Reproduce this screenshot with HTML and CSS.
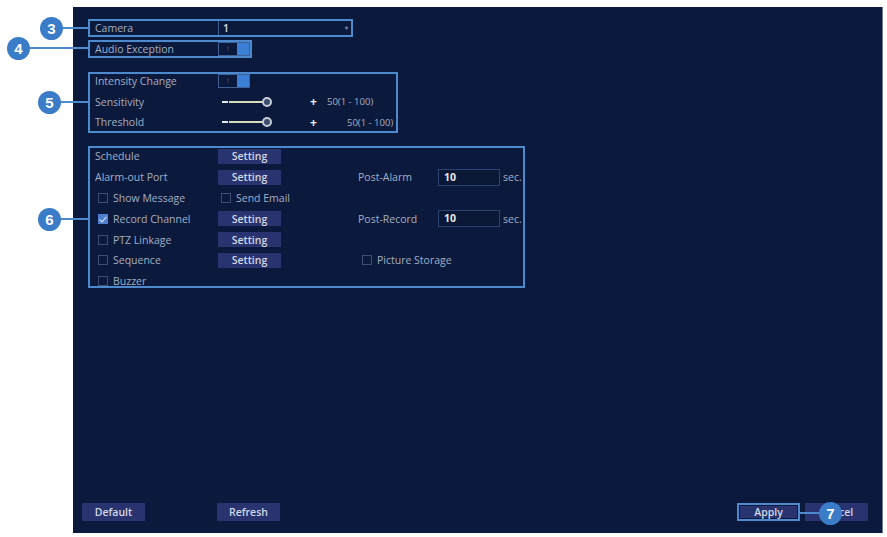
FILE: index.html
```html
<!DOCTYPE html>
<html lang="en">
<head>
    <meta charset="UTF-8">
    <title>Exception - Audio</title>
    <link rel="stylesheet" href="styles.css">
</head>
<body>
    <div id="stage">
        <div class="panel">
            <div class="box box-camera">
                <span class="label">Camera</span>
                <div class="select"><span>1</span><i class="caret">&#9662;</i></div>
            </div>
            <div class="box box-audio">
                <span class="label">Audio Exception</span>
                <span class="toggle"><b>1</b><i></i></span>
            </div>

            <div class="box box-level">
                <div class="rows">
                    <div class="row">
                        <span class="label">Intensity Change</span>
                        <span class="toggle"><b>1</b><i></i></span>
                    </div>
                    <div class="row">
                        <span class="label">Sensitivity</span>
                        <div class="slider">
                            <span class="minus"></span><span class="track"></span><span class="knob"></span>
                            <span class="plus">+</span><span class="range">50(1 - 100)</span>
                        </div>
                    </div>
                    <div class="row">
                        <span class="label">Threshold</span>
                        <div class="slider">
                            <span class="minus"></span><span class="track"></span><span class="knob"></span>
                            <span class="plus">+</span><span class="range far">50(1 - 100)</span>
                        </div>
                    </div>
                </div>
            </div>

            <div class="box box-link">
                <div class="grid">
                    <span class="label">Schedule</span>
                    <span class="btn small">Setting</span>
                    <span class="rest"></span>

                    <span class="label">Alarm-out Port</span>
                    <span class="btn small">Setting</span>
                    <span class="label plain">Post-Alarm</span>
                    <span class="input">10</span>
                    <span class="unit">sec.</span>

                    <span class="check"><i></i>Show Message</span>
                    <span class="check second"><i></i>Send Email</span>
                    <span class="rest"></span>

                    <span class="check"><i class="on"></i>Record Channel</span>
                    <span class="btn small">Setting</span>
                    <span class="label plain">Post-Record</span>
                    <span class="input">10</span>
                    <span class="unit">sec.</span>

                    <span class="check"><i></i>PTZ Linkage</span>
                    <span class="btn small">Setting</span>
                    <span class="rest"></span>

                    <span class="check"><i></i>Sequence</span>
                    <span class="btn small">Setting</span>
                    <span class="check third wide"><i></i>Picture Storage</span>

                    <span class="check"><i></i>Buzzer</span>
                </div>
            </div>

            <div class="footer">
                <div class="group left">
                    <span class="btn">Default</span>
                    <span class="btn">Refresh</span>
                </div>
                <div class="group right">
                    <span class="btn current">Apply</span>
                    <span class="btn">Cancel</span>
                </div>
            </div>
        </div>

        <!-- callouts -->
        <span class="lead" style="left:62px;top:27px;width:26px"></span>
        <span class="num" style="left:40px;top:17px">3</span>
        <span class="lead" style="left:28px;top:47px;width:60px"></span>
        <span class="num" style="left:7px;top:37px">4</span>
        <span class="lead" style="left:60px;top:101px;width:28px"></span>
        <span class="num" style="left:38px;top:91px">5</span>
        <span class="lead" style="left:60px;top:218px;width:28px"></span>
        <span class="num" style="left:38px;top:208px">6</span>
        <span class="lead" style="left:800px;top:512px;width:20px"></span>
        <span class="num" style="left:819px;top:502px">7</span>
    </div>
</body>
</html>
```

FILE: styles.css
```css
*{
    margin: 0;
    padding: 0;
    box-sizing: border-box;
}
body{
    background: #fff;
    font-family: "Open Sans", "Noto Sans", sans-serif;
    font-size: 10.5px;
    color: #a4aec3;
}
#stage{
    position: relative;
    width: 887px;
    height: 537px;
    padding: 7px 0 0 73px;
}
.panel{
    width: 810px;
    height: 526px;
    background: #0b1a3c;
    border-right: 1px solid #6c7a93;
    display: flex;
    flex-direction: column;
    align-items: flex-start;
    padding: 12px 0 12px 15px;
}
.box{
    border: 2px solid #4d89cd;
}
.label{
    padding-left: 5px;
    white-space: nowrap;
}
.label.plain{
    padding-left: 0;
}

/* camera + audio */
.box-camera,.box-audio{
    display: flex;
    align-items: center;
    height: 18px;
}
.box-camera{
    width: 265px;
}
.box-audio{
    width: 164px;
    margin-top: 3px;
}
.box-camera .label,.box-audio .label{
    width: 128px;
}
.select{
    flex: 1;
    height: 14px;
    border-left: 1px solid #3d5a8c;
    display: flex;
    align-items: center;
    justify-content: space-between;
    padding: 0 3px 0 4px;
    color: #d6dbe6;
    font-weight: 600;
}
.caret{
    font-style: normal;
    font-size: 6px;
    color: #7f8aa3;
}
.toggle{
    display: flex;
    width: 32px;
    height: 14px;
    border: 1px solid #3f5f95;
}
.toggle b{
    width: 18px;
    font-size: 6px;
    line-height: 12px;
    text-align: center;
    color: #55627e;
    font-weight: normal;
}
.toggle i{
    flex: 1;
    background: #3b80d4;
}

/* intensity block */
.box-level{
    width: 310px;
    height: 61px;
    margin-top: 14px;
    overflow: hidden;
}
.rows{
    margin-top: -3px;
}
.row{
    display: flex;
    align-items: center;
    height: 20.5px;
}
.row .label{
    width: 128px;
}
.slider{
    display: flex;
    align-items: center;
}
.minus{
    width: 6px;
    height: 2px;
    background: #e3e6ee;
    margin: 0 1px 0 4px;
}
.track{
    width: 34px;
    height: 2px;
    background: #d7dcb8;
}
.knob{
    width: 10px;
    height: 10px;
    border-radius: 50%;
    background: #3a4c6e;
    border: 2px solid #c8ccd6;
    margin-left: -1px;
}
.plus{
    margin-left: 38px;
    width: 10px;
    color: #eef0f5;
    font-weight: 700;
    font-size: 12px;
}
.range{
    margin-left: 7px;
    font-size: 9.5px;
}
.range.far{
    margin-left: 27px;
}

/* linkage block */
.box-link{
    width: 437px;
    height: 142px;
    margin-top: 13px;
    overflow: hidden;
}
.grid{
    margin-top: -2px;
    display: grid;
    grid-template-columns: 128px 140px 80px 62px 1fr;
    grid-auto-rows: 20.8px;
    align-items: center;
}
.rest{
    grid-column: span 3;
}
.btn{
    display: inline-flex;
    align-items: center;
    justify-content: center;
    width: 63px;
    height: 18px;
    background: #28336f;
    color: #d3d8e6;
    font-weight: 600;
}
.btn.small{
    height: 15px;
}
.input{
    height: 17px;
    border: 1px solid #2c4272;
    background: #0a1735;
    padding-left: 5px;
    line-height: 15px;
    color: #e6e9f0;
    font-weight: 700;
}
.unit{
    padding-left: 3px;
}
.check{
    display: flex;
    align-items: center;
    white-space: nowrap;
    padding-left: 8px;
}
.check.second{
    padding-left: 3px;
}
.check.third{
    padding-left: 4px;
}
.check.wide{
    grid-column: span 3;
}
.check i{
    width: 10px;
    height: 10px;
    border: 1px solid #3d4e72;
    margin-right: 5px;
    flex: none;
}
.check i.on{
    background: #4f7fd0;
    border-color: #4f7fd0;
    position: relative;
}
.check i.on::after{
    content: "";
    position: absolute;
    left: 2px;
    top: 0;
    width: 3px;
    height: 6px;
    border: solid #e8ecf5;
    border-width: 0 1.5px 1.5px 0;
    transform: rotate(40deg);
}

/* bottom buttons */
.footer{
    margin-top: auto;
    margin-left: -6px;
    width: 786px;
    display: flex;
    justify-content: space-between;
}
.group{
    display: flex;
}
.group.left{
    gap: 72px;
}
.group.right{
    gap: 5px;
}
.footer .btn.current{
    box-shadow: inset 0 0 0 2px #4d89cd, inset 0 0 0 3px #0b1a3c;
}

/* callouts */
.num{
    position: absolute;
    width: 23px;
    height: 23px;
    border-radius: 50%;
    background: #3b7cc9;
    color: #fff;
    font-family: "Liberation Sans", sans-serif;
    font-weight: 700;
    font-size: 15px;
    line-height: 23px;
    text-align: center;
}
.lead{
    position: absolute;
    height: 2px;
    background: #4d89cd;
}
```
